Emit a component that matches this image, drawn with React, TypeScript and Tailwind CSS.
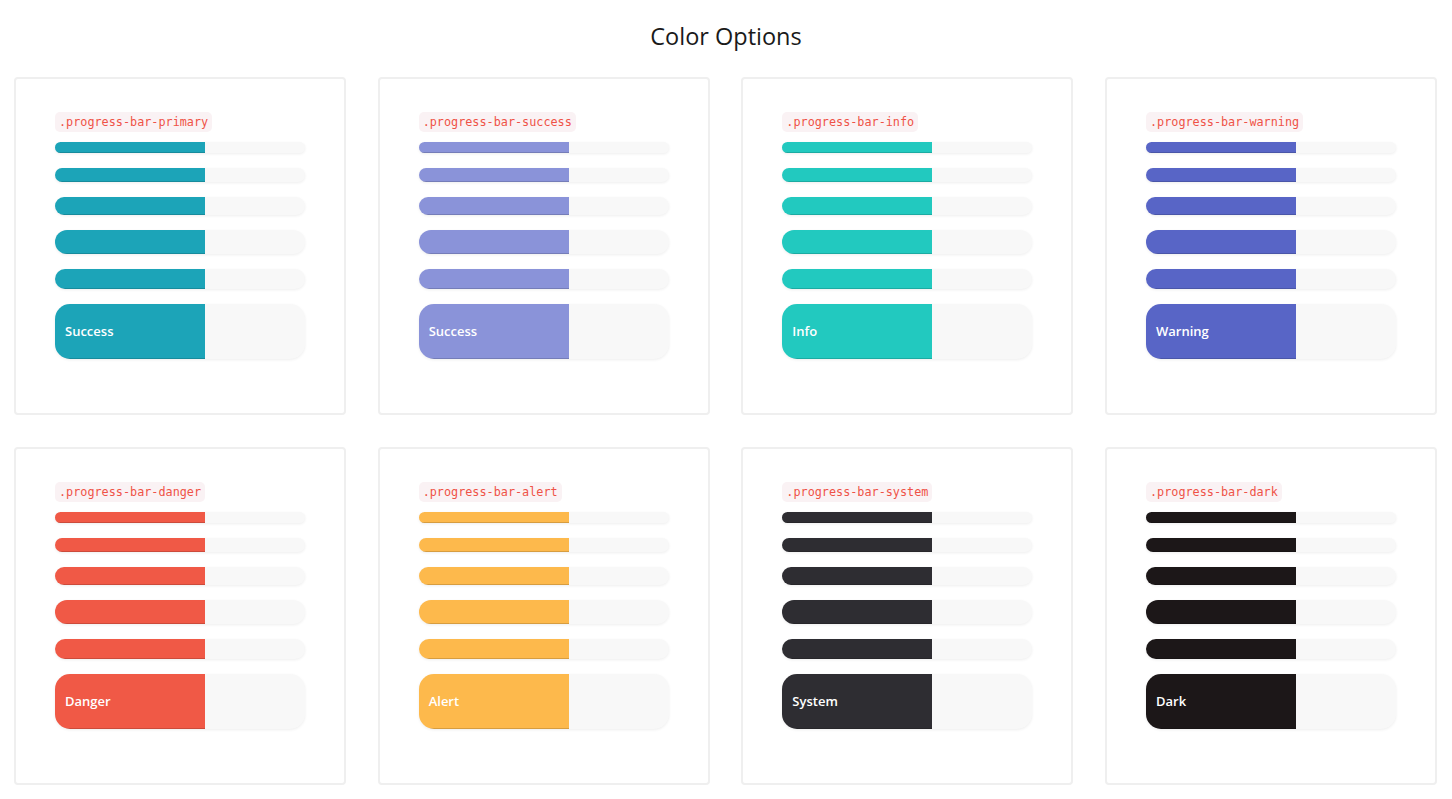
import React from "react";

type Opt = { cls: string; label: string; color: string };

const opts: Opt[] = [
  { cls: ".progress-bar-primary", label: "Success", color: "#1ca4b8" },
  { cls: ".progress-bar-success", label: "Success", color: "#8a93d9" },
  { cls: ".progress-bar-info", label: "Info", color: "#22c9bf" },
  { cls: ".progress-bar-warning", label: "Warning", color: "#5865c6" },
  { cls: ".progress-bar-danger", label: "Danger", color: "#f05946" },
  { cls: ".progress-bar-alert", label: "Alert", color: "#fdb94c" },
  { cls: ".progress-bar-system", label: "System", color: "#2e2d32" },
  { cls: ".progress-bar-dark", label: "Dark", color: "#1c1718" },
];

function Bar({ h, color, big, label }: { h: string; color: string; big?: boolean; label?: string }) {
  return (
    <div
      className={`${h} w-full bg-[#f8f8f8] overflow-hidden flex shadow-[0_1px_3px_rgba(0,0,0,0.07)] ${
        big ? "rounded-[15px]" : "rounded-full"
      }`}
    >
      <div
        className="h-full w-[60%] flex items-center pl-[10px] shadow-[inset_0_-1px_0_rgba(0,0,0,0.15)]"
        style={{ backgroundColor: color }}
      >
        {label && (
          <span className="text-white text-[13px] font-semibold font-['Open_Sans',sans-serif]">{label}</span>
        )}
      </div>
    </div>
  );
}

function Card({ o }: { o: Opt }) {
  return (
    <div className="box-border h-[338px] border-2 border-[#efefef] rounded-[4px] bg-white pt-[33px] px-[39px]">
      <div className="flex">
        <code className="h-[20px] leading-[20px] px-[4px] rounded-[5px] bg-[#faf2f4] text-[#ef5247] text-[11.8px] font-['DejaVu_Sans_Mono',monospace]">
          {o.cls}
        </code>
      </div>
      <div className="mt-[10px] flex flex-col gap-[15px]">
        <Bar h="h-[11px]" color={o.color} />
        <Bar h="h-[14px]" color={o.color} />
        <Bar h="h-[18px]" color={o.color} />
        <Bar h="h-[24px]" color={o.color} />
        <Bar h="h-[20px]" color={o.color} />
        <Bar h="h-[55px]" color={o.color} big label={o.label} />
      </div>
    </div>
  );
}

export default function App() {
  return (
    <div className="min-h-[799px] bg-white font-['Open_Sans',sans-serif]">
      <h1 className="pt-[20px] h-[52px] leading-[32px] text-center text-[23.5px] text-[#1a1a1a] font-normal">
        Color Options
      </h1>
      <div className="mt-[25px] pl-[14px] pr-[15px] grid grid-cols-4 gap-x-[31.67px] gap-y-[32px]">
        {opts.map((o) => (
          <Card key={o.cls} o={o} />
        ))}
      </div>
    </div>
  );
}
